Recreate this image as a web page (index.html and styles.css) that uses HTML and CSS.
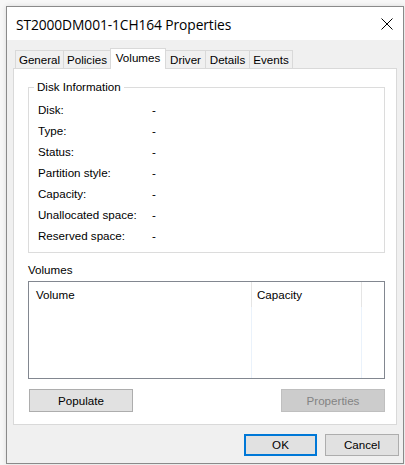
FILE: index.html
```html
<!DOCTYPE html>
<html>
<head>
<meta charset="utf-8">
<link rel="stylesheet" href="styles.css">
</head>
<body>
<div class="window">
  <div class="titlebar">
    <span class="title">ST2000DM001-1CH164 Properties</span>
    <svg class="close" width="12" height="12" viewBox="0 0 12 12"><path d="M0.5 0.5 L11.5 11.5 M11.5 0.5 L0.5 11.5" stroke="#000" stroke-width="1" fill="none"/></svg>
  </div>
  <div class="client">
    <div class="tabs">
      <div class="tab t-general">General</div>
      <div class="tab t-policies">Policies</div>
      <div class="tab active t-volumes">Volumes</div>
      <div class="tab t-driver">Driver</div>
      <div class="tab t-details">Details</div>
      <div class="tab t-events">Events</div>
    </div>
    <div class="panel">
      <div class="group">
        <span class="legend">Disk Information</span>
        <div class="row"><span class="lbl">Disk:</span><span class="val">-</span></div>
        <div class="row"><span class="lbl">Type:</span><span class="val">-</span></div>
        <div class="row"><span class="lbl">Status:</span><span class="val">-</span></div>
        <div class="row"><span class="lbl">Partition style:</span><span class="val">-</span></div>
        <div class="row"><span class="lbl">Capacity:</span><span class="val">-</span></div>
        <div class="row"><span class="lbl">Unallocated space:</span><span class="val">-</span></div>
        <div class="row"><span class="lbl">Reserved space:</span><span class="val">-</span></div>
      </div>
      <div class="vol-label">Volumes</div>
      <div class="list">
        <div class="col c1"><div class="hdr">Volume</div></div>
        <div class="col c2"><div class="hdr">Capacity</div></div>
        <div class="col c3"><div class="hdr"></div></div>
      </div>
      <div class="panel-buttons">
        <div class="btn">Populate</div>
        <div class="btn disabled">Properties</div>
      </div>
    </div>
    <div class="dlg-buttons">
      <div class="btn ok">OK</div>
      <div class="btn cancel">Cancel</div>
    </div>
  </div>
</div>
</body>
</html>
```
FILE: styles.css
```css
* { box-sizing: border-box; }
html, body { margin: 0; padding: 0; }
body {
  background: #f7f7f7;
  width: 405px;
  height: 465px;
  overflow: hidden;
  font-family: "Liberation Sans", Arial, sans-serif;
  font-size: 11.6px;
  color: #000;
}
.window {
  margin: 6px 0 0 6px;
  width: 398px;
  height: 458px;
  border: 1px solid #8a8a8a;
  box-shadow: 0 0 5px rgba(0,0,0,0.12);
  background: #f0f0f0;
  display: flex;
  flex-direction: column;
}
.titlebar {
  height: 33px;
  background: #fff;
  display: flex;
  align-items: center;
  padding-left: 9px;
  padding-right: 10px;
  justify-content: space-between;
}
.title {
  font-family: "Open Sans", "Noto Sans", sans-serif;
  font-size: 13.8px;
  letter-spacing: -0.1px;
  color: #000;
  padding-top: 1px;
}
.close { display: block; margin-top: 1px; }
.client {
  flex: 1;
  padding: 8px 0 0 6px;
}
.tabs {
  display: flex;
  align-items: flex-end;
  height: 20px;
  margin-left: 2px;
  position: relative;
  z-index: 2;
}
.tab {
  height: 18px;
  border: 1px solid #d9d9d9;
  border-bottom: none;
  background: #f0f0f0;
  display: flex;
  align-items: center;
  justify-content: center;
  margin-left: -1px;
}
.tab:first-child { margin-left: 0; }
.tab.active {
  background: #fff;
  margin-bottom: -1px;
  height: 21px;
  padding-bottom: 3px;
  position: relative;
  z-index: 3;
}
.t-general { width: 49px; }
.t-policies { width: 48px; }
.t-volumes { width: 56px; }
.t-driver { width: 41px; }
.t-details { width: 45px; }
.t-events { width: 44px; }
.panel {
  width: 384px;
  height: 357px;
  background: #fff;
  border: 1px solid #d9d9d9;
  padding: 18px 0 0 14px;
  position: relative;
  z-index: 1;
}
.group {
  position: relative;
  width: 357px;
  height: 166px;
  border: 1px solid #dcdcdc;
  padding: 11px 0 0 9px;
}
.legend {
  position: absolute;
  top: -8px;
  left: 5px;
  background: #fff;
  padding: 0 3px 0 3px;
  line-height: 14px;
}
.row {
  display: flex;
  height: 21px;
  align-items: center;
}
.lbl { width: 114px; }
.vol-label {
  margin-top: 9px;
  height: 19px;
  line-height: 16px;
}
.list {
  width: 357px;
  height: 98px;
  border: 1px solid #828790;
  display: flex;
}
.col {
  border-right: 1px solid #eaf2fb;
  height: 100%;
}
.c1 { width: 223px; }
.c2 { width: 110px; }
.c3 { width: 22px; border-right: none; }
.hdr {
  height: 25px;
  border-right: 1px solid #e5e5e5;
  margin-right: -1px;
  padding-top: 6px;
  line-height: 14px;
}
.c1 .hdr { padding-left: 7px; }
.c2 .hdr { padding-left: 5px; }
.c3 .hdr { border-right: none; margin-right: 0; }
.panel-buttons {
  display: flex;
  justify-content: space-between;
  width: 357px;
  margin-top: 10px;
  padding-left: 1px;
}
.btn {
  height: 23px;
  width: 104px;
  background: #e1e1e1;
  border: 1px solid #adadad;
  display: flex;
  align-items: center;
  justify-content: center;
  padding-bottom: 1px;
}
.btn.disabled {
  background: #cccccc;
  border-color: #bfbfbf;
  color: #838383;
}
.dlg-buttons {
  display: flex;
  justify-content: flex-end;
  gap: 8px;
  margin-top: 9px;
  margin-right: 4px;
}
.btn.ok {
  width: 73px;
  height: 22px;
  border: 2px solid #0078d7;
}
.btn.cancel {
  width: 74px;
  height: 22px;
}
```
